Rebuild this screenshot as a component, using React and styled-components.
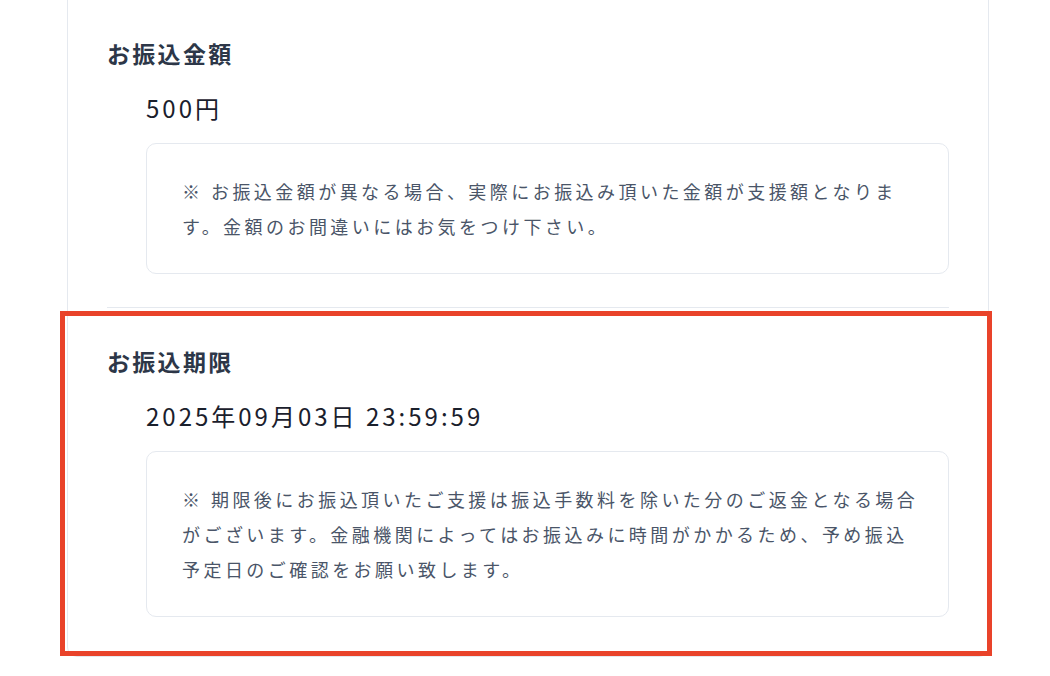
import React from 'react';
import styled, { createGlobalStyle } from 'styled-components';

const GlobalStyle = createGlobalStyle`
  html, body {
    margin: 0;
    padding: 0;
    background: #ffffff;
  }
  body {
    font-family: "Noto Sans CJK JP", "Noto Sans", sans-serif;
  }
`;

const Page = styled.div`
  width: 1050px;
  height: 676px;
  overflow: hidden;
  background: #ffffff;
`;

const Card = styled.div`
  margin-left: 67px;
  width: 842px;
  padding: 0 39px;
  border: 1px solid #e5e9ef;
  border-top: none;
  border-radius: 0 0 10px 10px;
  background: #ffffff;
`;

const Section = styled.section`
  position: relative;
  display: flex;
  flex-direction: column;
  padding: 38px 0 ${(p) => (p.last ? '39px' : '33px')};
  border-bottom: ${(p) => (p.last ? 'none' : '1px solid #e5e9ef')};
`;

const Heading = styled.h2`
  margin: 0;
  font-size: 23px;
  line-height: 30px;
  font-weight: 700;
  letter-spacing: 0.1em;
  color: #2d3748;
`;

const Value = styled.div`
  margin: 23px 0 0 39px;
  font-size: 24px;
  line-height: 34px;
  font-weight: 400;
  letter-spacing: 3px;
  color: #1a202c;
`;

const Note = styled.p`
  margin: 18px 0 0 39px;
  padding: 29.5px 25px 29.5px 35px;
  border: 1px solid #e5e9ef;
  border-radius: 10px;
  font-size: 18px;
  line-height: 35px;
  letter-spacing: 3.45px;
  color: #4a5568;
  line-break: strict;
`;

const Highlight = styled.div`
  position: absolute;
  top: 3px;
  left: -47px;
  right: -43px;
  bottom: 0;
  border: 5px solid #e9432a;
  pointer-events: none;
`;

const sections = [
  {
    title: 'お振込金額',
    value: '500円',
    note: '※ お振込金額が異なる場合、実際にお振込み頂いた金額が支援額となります。金額のお間違いにはお気をつけ下さい。',
  },
  {
    title: 'お振込期限',
    value: '2025年09月03日 23:59:59',
    note: '※ 期限後にお振込頂いたご支援は振込手数料を除いた分のご返金となる場合がございます。金融機関によってはお振込みに時間がかかるため、予め振込予定日のご確認をお願い致します。',
    highlighted: true,
  },
];

const App = () => (
  <Page>
    <GlobalStyle />
    <Card>
      {sections.map((s, i) => (
        <Section key={s.title} last={i === sections.length - 1}>
          <Heading>{s.title}</Heading>
          <Value>{s.value}</Value>
          <Note>{s.note}</Note>
          {s.highlighted && <Highlight />}
        </Section>
      ))}
    </Card>
  </Page>
);

export default App;
